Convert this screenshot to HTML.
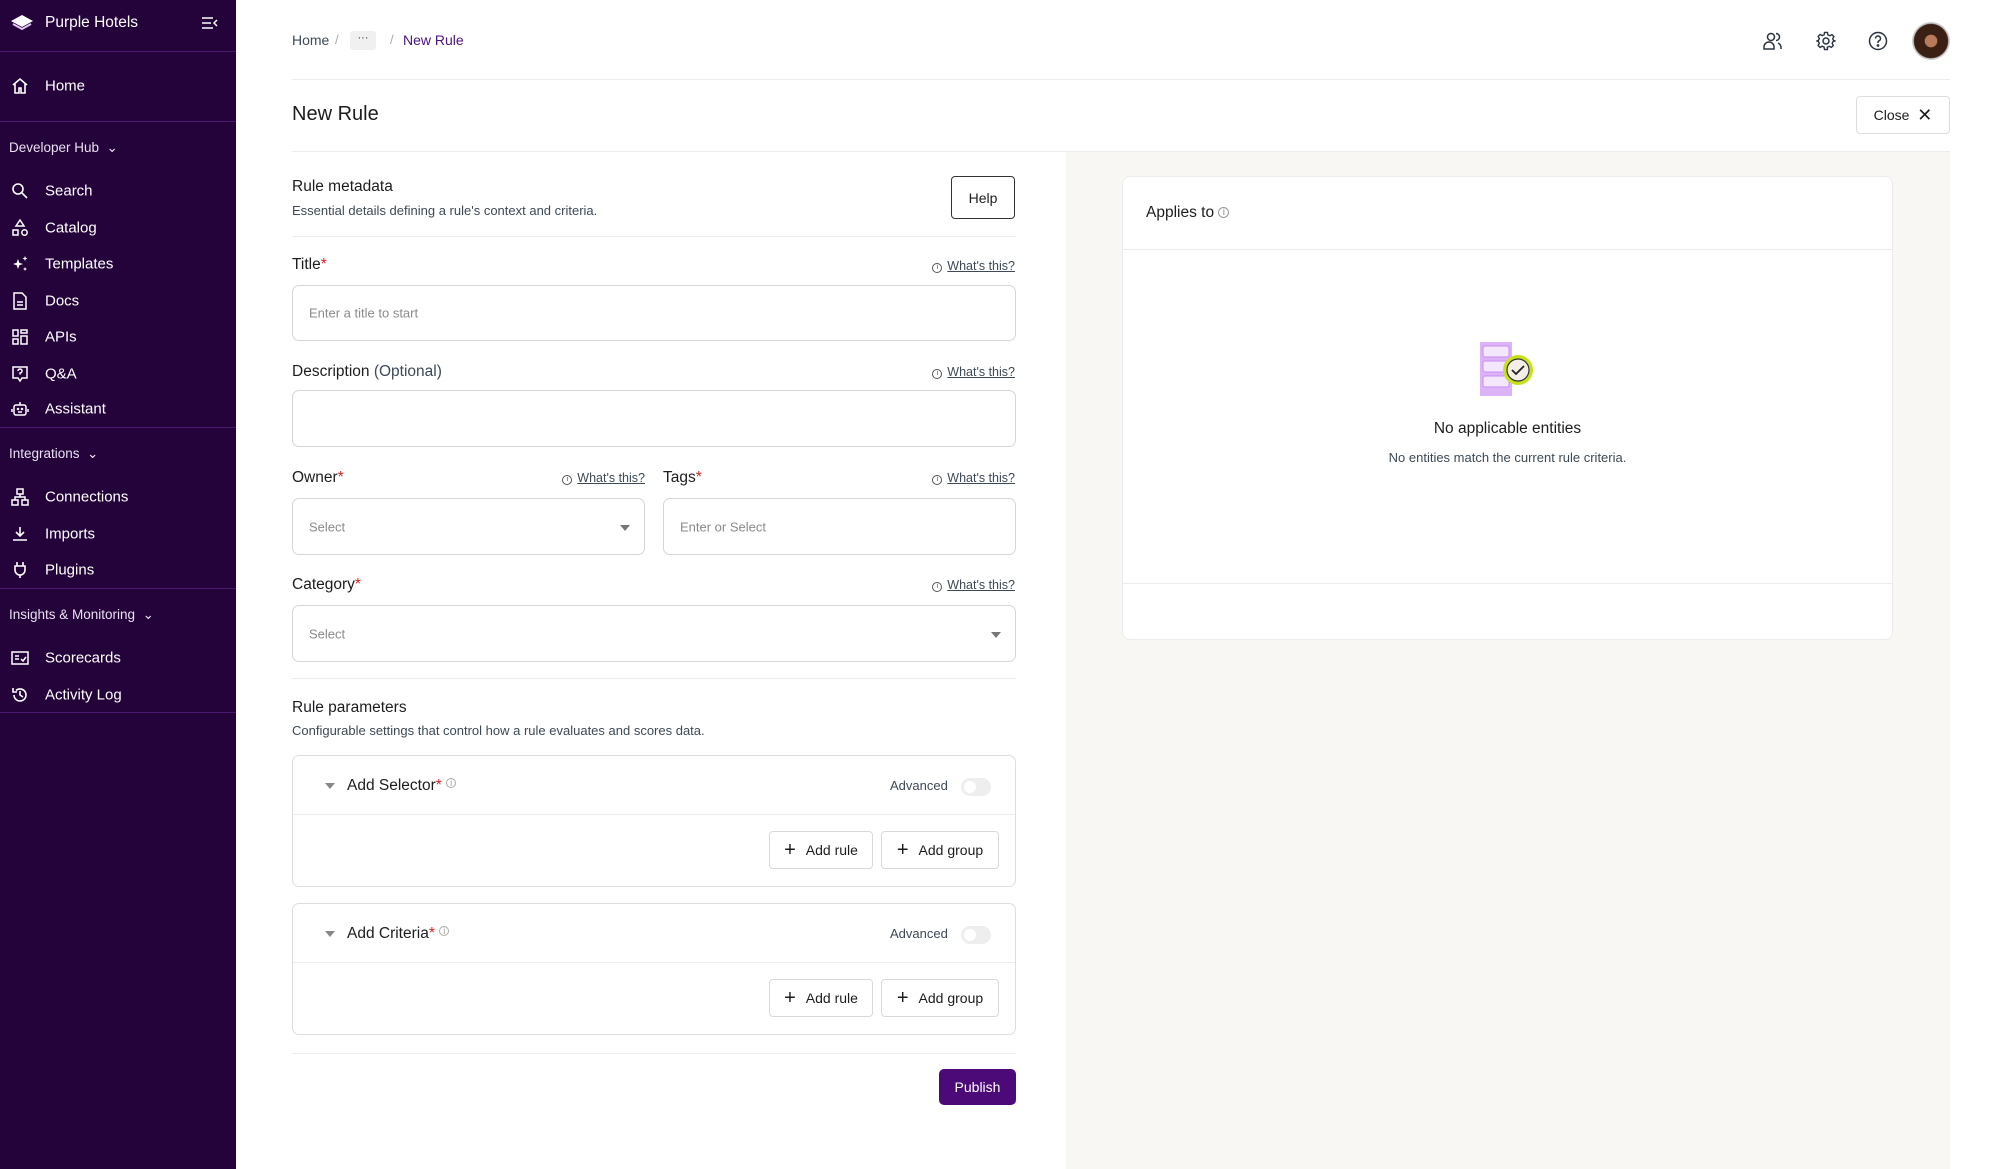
<!DOCTYPE html>
<html><head><meta charset="utf-8"><style>
*{box-sizing:border-box;margin:0;padding:0}
body{width:2000px;height:1169px;position:relative;background:#fff;font-family:"Liberation Sans",sans-serif;color:#1d1d1f;overflow:hidden}
.a{position:absolute}
.sb{left:0;top:0;width:236px;height:1169px;background:#24033a}
.sb .hr{position:absolute;left:0;width:236px;height:1px;background:#4a1a73}
.sb .it{position:absolute;left:45px;font-size:15px;color:#fff;transform:translateY(-50%)}
.sb .sec{position:absolute;left:9px;font-size:13.5px;color:#e8e0f0;transform:translateY(-50%)}
.sb svg.ic{position:absolute;left:11px;width:18px;height:18px;transform:translateY(-50%)}
.hl{position:absolute;height:1px;background:#ececec}
.lbl{position:absolute;font-size:15.5px;color:#1d1d1f;transform:translateY(-50%)}
.lbl b{color:#d92020;font-weight:normal}
.wt{position:absolute;font-size:12.5px;color:#3d4a55;text-decoration:underline;transform:translateY(-50%);white-space:nowrap}
.wt i{font-style:normal;text-decoration:none;display:inline-block;width:10px;height:10px;border:1px solid #555;border-radius:50%;font-size:7px;line-height:8px;text-align:center;margin-right:5px;vertical-align:1px}
.inp{position:absolute;border:1px solid #d6d6d6;border-radius:7px;background:#fff}
.ph{position:absolute;left:16px;top:50%;transform:translateY(-50%);font-size:13px;color:#8a8a8a}
.car{position:absolute;right:14px;top:50%;margin-top:-2px;border-left:5px solid transparent;border-right:5px solid transparent;border-top:6px solid #777}
.btn{position:absolute;border:1px solid #d9d9d9;border-radius:4px;background:#fff;font-size:14px;display:flex;align-items:center;justify-content:center;color:#1d1d1f}
.box{position:absolute;left:292px;width:724px;border:1px solid #dedede;border-radius:7px}
.tog{position:absolute;width:30px;height:18px;border-radius:9px;background:#eee}
.tog:after{content:"";position:absolute;left:3px;top:3px;width:12px;height:12px;border-radius:50%;background:#fff}
</style></head><body>
<div class="a sb">
 <svg class="a" style="left:10px;top:14px" width="24" height="18" viewBox="0 0 24 18"><path d="M12 1 L23 7 L12 13 L1 7Z" fill="#fff"/><path d="M3 10 L12 15 L21 10" stroke="#e2c9f5" stroke-width="2" fill="none"/></svg>
 <div class="it" style="left:45px;top:23px;font-size:15.5px">Purple Hotels</div>
 <svg class="a" style="left:201px;top:16px" width="18" height="14" viewBox="0 0 18 14" stroke="#fff" stroke-width="1.5" fill="none"><path d="M1 2h11M1 7h9M1 12h11M16 4l-3 3 3 3"/></svg>
 <div class="hr" style="top:51px"></div>
 <svg class="ic" style="top:86px" viewBox="0 0 18 18" stroke="#fff" stroke-width="1.6" fill="none"><path d="M2 8l7-6 7 6M4 7v9h4v-5h2v5h4V7"/></svg>
 <div class="it" style="top:86px">Home</div>
 <div class="hr" style="top:121px"></div>
 <div class="sec" style="top:148px">Developer Hub &nbsp;⌄</div>
 <svg class="ic" style="top:191px" viewBox="0 0 18 18" stroke="#fff" stroke-width="1.6" fill="none"><circle cx="7" cy="7" r="5"/><path d="M11 11l5 5"/></svg>
 <div class="it" style="top:191px">Search</div>
 <svg class="ic" style="top:228px" viewBox="0 0 18 18" stroke="#fff" stroke-width="1.5" fill="none"><path d="M9 1l4 6H5z"/><rect x="2" y="11" width="5" height="5"/><circle cx="13.5" cy="13.5" r="2.7"/></svg>
 <div class="it" style="top:228px">Catalog</div>
 <svg class="ic" style="top:264px" viewBox="0 0 18 18" fill="#fff"><path d="M7 4l1.3 3.7L12 9l-3.7 1.3L7 14l-1.3-3.7L2 9l3.7-1.3z"/><path d="M14 1l.7 1.8 1.8.7-1.8.7L14 6l-.7-1.8-1.8-.7 1.8-.7zM14 12l.6 1.4 1.4.6-1.4.6L14 16l-.6-1.4-1.4-.6 1.4-.6z"/></svg>
 <div class="it" style="top:264px">Templates</div>
 <svg class="ic" style="top:301px" viewBox="0 0 18 18" stroke="#fff" stroke-width="1.5" fill="none"><path d="M3 1h8l4 4v12H3z"/><path d="M6 10h6M6 13h6"/></svg>
 <div class="it" style="top:301px">Docs</div>
 <svg class="ic" style="top:337px" viewBox="0 0 18 18" stroke="#fff" stroke-width="1.5" fill="none"><rect x="2" y="2" width="5" height="6"/><rect x="10" y="2" width="6" height="3"/><rect x="2" y="11" width="5" height="5"/><rect x="10" y="8" width="6" height="8"/></svg>
 <div class="it" style="top:337px">APIs</div>
 <svg class="ic" style="top:374px" viewBox="0 0 18 18" stroke="#fff" stroke-width="1.5" fill="none"><path d="M2 2h14v11h-5l-2 3-2-3H2z"/><path d="M7 6a2 2 0 1 1 2 2v1.5"/></svg>
 <div class="it" style="top:374px">Q&amp;A</div>
 <svg class="ic" style="top:409px" viewBox="0 0 18 18" stroke="#fff" stroke-width="1.5" fill="none"><rect x="3" y="5" width="12" height="10" rx="2"/><path d="M9 2v3M1 9v3M17 9v3M7 12h4"/><circle cx="7" cy="9" r=".5"/><circle cx="11" cy="9" r=".5"/></svg>
 <div class="it" style="top:409px">Assistant</div>
 <div class="hr" style="top:427px"></div>
 <div class="sec" style="top:454px">Integrations &nbsp;⌄</div>
 <svg class="ic" style="top:497px" viewBox="0 0 18 18" stroke="#fff" stroke-width="1.5" fill="none"><rect x="6" y="1" width="6" height="5"/><rect x="1" y="12" width="6" height="5"/><rect x="11" y="12" width="6" height="5"/><path d="M9 6v3M4 12V9h10v3"/></svg>
 <div class="it" style="top:497px">Connections</div>
 <svg class="ic" style="top:534px" viewBox="0 0 18 18" stroke="#fff" stroke-width="1.6" fill="none"><path d="M9 2v9M5 7l4 4 4-4M2 15h14"/></svg>
 <div class="it" style="top:534px">Imports</div>
 <svg class="ic" style="top:570px" viewBox="0 0 18 18" stroke="#fff" stroke-width="1.6" fill="none"><path d="M6 1v4M12 1v4M4 5h10v4a5 5 0 0 1-10 0zM9 14v3"/></svg>
 <div class="it" style="top:570px">Plugins</div>
 <div class="hr" style="top:588px"></div>
 <div class="sec" style="top:615px">Insights &amp; Monitoring &nbsp;⌄</div>
 <svg class="ic" style="top:658px" viewBox="0 0 18 18" stroke="#fff" stroke-width="1.5" fill="none"><rect x="1" y="3" width="16" height="12"/><path d="M4 7h4M4 10h4M10 10l2 2 3-4"/></svg>
 <div class="it" style="top:658px">Scorecards</div>
 <svg class="ic" style="top:695px" viewBox="0 0 18 18" stroke="#fff" stroke-width="1.6" fill="none"><path d="M3 9a6 6 0 1 0 2-4.5M2 2v4h4M9 5v4l3 2"/></svg>
 <div class="it" style="top:695px">Activity Log</div>
 <div class="hr" style="top:712px"></div>
</div>

<!-- header -->
<div class="a" style="left:292px;top:32px;font-size:14px;color:#3d4a55">Home</div>
<div class="a" style="left:335px;top:32px;font-size:13px;color:#aaa">/</div>
<div class="a" style="left:350px;top:31px;width:26px;height:19px;background:#f0f0f0;border-radius:3px;font-size:11px;text-align:center;line-height:15px;color:#333">···</div>
<div class="a" style="left:390px;top:32px;font-size:13px;color:#aaa">/</div>
<div class="a" style="left:403px;top:32px;font-size:14px;color:#4b1280">New Rule</div>
<svg class="a" style="left:1763px;top:31px" width="20" height="20" viewBox="0 0 20 20" stroke="#2a3540" stroke-width="1.5" fill="none"><circle cx="8" cy="6" r="3.5"/><path d="M1 18v-2a5 5 0 0 1 10 0v2zM13 2.5a3.5 3.5 0 0 1 0 7M15 12a5 5 0 0 1 3 4.5V18"/></svg>
<svg class="a" style="left:1816px;top:31px" width="20" height="20" viewBox="0 0 20 20" stroke="#2a3540" stroke-width="1.5" fill="none"><circle cx="10" cy="10" r="3"/><path d="M8.5 1h3l.5 2.5 2 1 2.3-1.2 2 2-1.2 2.3 1 2L20 10v0l-2.5.5-1 2 1.2 2.3-2 2-2.3-1.2-2 1L11.5 19h-3l-.5-2.5-2-1-2.3 1.2-2-2L3 12.5l-1-2L0 10l2-.5 1-2-1.2-2.3 2-2L6.1 4.4l2-1z" transform="scale(.95) translate(.5 .5)"/></svg>
<svg class="a" style="left:1868px;top:31px" width="20" height="20" viewBox="0 0 20 20" stroke="#2a3540" stroke-width="1.5" fill="none"><circle cx="10" cy="10" r="8.5"/><path d="M7.5 7.5a2.5 2.5 0 1 1 3.5 2.3c-.7.3-1 .8-1 1.5v.7"/><circle cx="10" cy="14.5" r=".6" fill="#2a3540"/></svg>
<div class="a" style="left:1912px;top:22px;width:38px;height:38px;border-radius:50%;background:radial-gradient(ellipse at 50% 50%,#b87a5a 0 22%,#3a1f14 25% 62%,#ccc 66%)"></div>
<div class="hl" style="left:292px;top:79px;width:1658px"></div>
<div class="a" style="left:292px;top:103px;font-size:20px;color:#1d1d1f">New Rule</div>
<div class="btn" style="left:1856px;top:96px;width:94px;height:38px;border-color:#ddd">Close&nbsp;&nbsp;<span style="font-size:18px">✕</span></div>
<div class="hl" style="left:292px;top:151px;width:1658px"></div>

<!-- right panel -->
<div class="a" style="left:1066px;top:152px;width:884px;height:1017px;background:#f8f7f4"></div>
<div class="a" style="left:1122px;top:176px;width:771px;height:464px;background:#fff;border:1px solid #ececec;border-radius:8px"></div>
<div class="a" style="left:1146px;top:204px;font-size:15.5px">Applies to <span style="font-size:10px;color:#888;border:1px solid #999;border-radius:50%;display:inline-block;width:11px;height:11px;line-height:9px;text-align:center;vertical-align:2px">i</span></div>
<div class="hl" style="left:1123px;top:249px;width:769px"></div>
<div class="hl" style="left:1123px;top:583px;width:769px"></div>
<svg class="a" style="left:1478px;top:340px" width="60" height="60" viewBox="0 0 60 60"><rect x="2" y="2" width="32" height="54" fill="#dcb3f7"/><rect x="5" y="6" width="26" height="11" rx="2" fill="#f3e6fd" stroke="#c98cf0"/><rect x="5" y="21" width="26" height="11" rx="2" fill="#f3e6fd" stroke="#c98cf0"/><rect x="5" y="36" width="26" height="11" rx="2" fill="#f3e6fd" stroke="#c98cf0"/><circle cx="40" cy="30" r="15" fill="#c8e01e"/><circle cx="40" cy="30" r="11" fill="#f4efe6" stroke="#333" stroke-width="1.2"/><path d="M34 30l4 4 8-8" stroke="#222" stroke-width="1.8" fill="none"/></svg>
<div class="a" style="left:1122px;width:771px;top:420px;text-align:center;font-size:15.5px">No applicable entities</div>
<div class="a" style="left:1122px;width:771px;top:450px;text-align:center;font-size:13px;color:#3d4a55">No entities match the current rule criteria.</div>

<!-- form -->
<div class="a" style="left:292px;top:178px;font-size:15.5px">Rule metadata</div>
<div class="a" style="left:292px;top:203px;font-size:13px;color:#3d4a55">Essential details defining a rule's context and criteria.</div>
<div class="btn" style="left:951px;top:176px;width:64px;height:43px;border:1.5px solid #333;border-radius:4px">Help</div>
<div class="hl" style="left:292px;top:236px;width:724px"></div>

<div class="lbl" style="left:292px;top:265px">Title<b>*</b></div>
<div class="wt" style="right:985px;top:266px"><i>i</i>What's this?</div>
<div class="inp" style="left:292px;top:285px;width:724px;height:56px"><span class="ph">Enter a title to start</span></div>

<div class="lbl" style="left:292px;top:372px">Description <span style="color:#3d4a55">(Optional)</span></div>
<div class="wt" style="right:985px;top:372px"><i>i</i>What's this?</div>
<div class="inp" style="left:292px;top:390px;width:724px;height:57px"></div>

<div class="lbl" style="left:292px;top:478px">Owner<b>*</b></div>
<div class="wt" style="right:1355px;top:478px"><i>i</i>What's this?</div>
<div class="inp" style="left:292px;top:498px;width:353px;height:57px"><span class="ph">Select</span><span class="car"></span></div>
<div class="lbl" style="left:663px;top:478px">Tags<b>*</b></div>
<div class="wt" style="right:985px;top:478px"><i>i</i>What's this?</div>
<div class="inp" style="left:663px;top:498px;width:353px;height:57px"><span class="ph">Enter or Select</span></div>

<div class="lbl" style="left:292px;top:585px">Category<b>*</b></div>
<div class="wt" style="right:985px;top:585px"><i>i</i>What's this?</div>
<div class="inp" style="left:292px;top:605px;width:724px;height:57px"><span class="ph">Select</span><span class="car"></span></div>
<div class="hl" style="left:292px;top:678px;width:724px"></div>

<div class="a" style="left:292px;top:699px;font-size:15.5px">Rule parameters</div>
<div class="a" style="left:292px;top:723px;font-size:13px;color:#3d4a55">Configurable settings that control how a rule evaluates and scores data.</div>

<div class="box" style="top:755px;height:132px">
 <span class="a" style="left:32px;top:27px;border-left:5px solid transparent;border-right:5px solid transparent;border-top:6px solid #888"></span>
 <div class="lbl" style="left:54px;top:30px">Add Selector<b>*</b> <span style="font-size:9px;color:#999;border:1px solid #aaa;border-radius:50%;display:inline-block;width:10px;height:10px;line-height:8px;text-align:center;vertical-align:4px">i</span></div>
 <div class="a" style="left:597px;top:22px;font-size:13px;color:#3d4a55">Advanced</div>
 <div class="tog" style="left:668px;top:22px"></div>
 <div class="hl" style="left:0;top:58px;width:722px"></div>
 <div class="btn" style="left:476px;top:75px;width:104px;height:38px"><span style="font-size:20px;margin-right:10px">+</span>Add rule</div>
 <div class="btn" style="left:588px;top:75px;width:118px;height:38px"><span style="font-size:20px;margin-right:10px">+</span>Add group</div>
</div>
<div class="box" style="top:903px;height:132px">
 <span class="a" style="left:32px;top:27px;border-left:5px solid transparent;border-right:5px solid transparent;border-top:6px solid #888"></span>
 <div class="lbl" style="left:54px;top:30px">Add Criteria<b>*</b> <span style="font-size:9px;color:#999;border:1px solid #aaa;border-radius:50%;display:inline-block;width:10px;height:10px;line-height:8px;text-align:center;vertical-align:4px">i</span></div>
 <div class="a" style="left:597px;top:22px;font-size:13px;color:#3d4a55">Advanced</div>
 <div class="tog" style="left:668px;top:22px"></div>
 <div class="hl" style="left:0;top:58px;width:722px"></div>
 <div class="btn" style="left:476px;top:75px;width:104px;height:38px"><span style="font-size:20px;margin-right:10px">+</span>Add rule</div>
 <div class="btn" style="left:588px;top:75px;width:118px;height:38px"><span style="font-size:20px;margin-right:10px">+</span>Add group</div>
</div>
<div class="hl" style="left:292px;top:1053px;width:724px"></div>
<div class="btn" style="left:939px;top:1069px;width:77px;height:36px;background:#4b0a78;border-color:#4b0a78;color:#fff;border-radius:5px">Publish</div>
</body></html>
